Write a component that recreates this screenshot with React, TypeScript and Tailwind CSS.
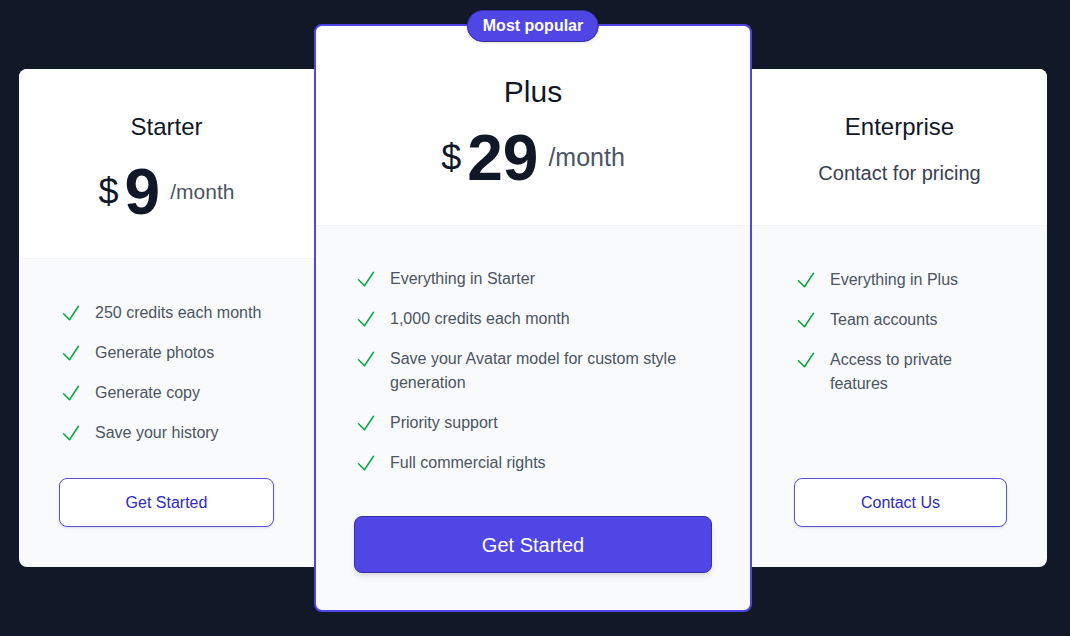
import React from 'react';

const FONT = { fontFamily: '"Liberation Sans", Arial, sans-serif' };

function CheckIcon() {
  return (
    <svg
      viewBox="0 0 24 24"
      fill="none"
      stroke="currentColor"
      strokeWidth={1.5}
      className="h-6 w-6 shrink-0 text-green-600"
    >
      <path strokeLinecap="round" strokeLinejoin="round" d="M4.5 12.75l6 6 9-13.5" />
    </svg>
  );
}

function Features({ items }: { items: string[] }) {
  return (
    <ul className="flex flex-col gap-4">
      {items.map(item => (
        <li key={item} className="flex items-start gap-3 text-base leading-6 text-gray-600">
          <CheckIcon />
          <span>{item}</span>
        </li>
      ))}
    </ul>
  );
}

export default function App() {
  return (
    <div style={FONT} className="flex h-screen w-full items-center bg-[#111827] pl-[19px]">
      {/* Starter */}
      <div className="flex h-[498px] w-[295px] flex-col overflow-hidden rounded-l-lg bg-gray-50">
        <div className="border-b border-gray-100 bg-white px-10 pt-[42px] pb-[34px] text-center">
          <h3 className="text-2xl leading-8 text-gray-900">Starter</h3>
          <div className="mt-[17px] flex items-center justify-center">
            <span className="text-4xl text-gray-900">$</span>
            <span className="ml-1.5 text-[64px] font-bold leading-none text-gray-900">9</span>
            <span className="ml-2.5 text-[21px] text-gray-600">/month</span>
          </div>
        </div>
        <div className="flex flex-1 flex-col px-10 pt-[42px] pb-10">
          <Features items={['250 credits each month', 'Generate photos', 'Generate copy', 'Save your history']} />
          <button className="mt-auto h-[49px] w-full rounded-lg border border-[#5a52d9] bg-white text-base text-[#2e2bc2] shadow-sm">
            Get Started
          </button>
        </div>
      </div>

      {/* Plus */}
      <div className="relative z-10 flex h-[588px] w-[438px] flex-col rounded-lg border-2 border-[#4f46e5] bg-gray-50">
        <span className="absolute left-1/2 top-0 -translate-x-1/2 -translate-y-1/2 rounded-full border border-[#3730a3] bg-[#4f46e5] px-[15px] py-[3px] text-base font-bold leading-6 text-white shadow">
          Most popular
        </span>
        <div className="rounded-t-lg border-b border-gray-100 bg-white px-[38px] pt-[48px] pb-[35px] text-center">
          <h3 className="text-3xl leading-9 text-gray-900">Plus</h3>
          <div className="mt-4 flex items-center justify-center">
            <span className="text-4xl text-gray-900">$</span>
            <span className="ml-1.5 text-[64px] font-bold leading-none text-gray-900">29</span>
            <span className="ml-2.5 text-[25px] text-gray-600">/month</span>
          </div>
        </div>
        <div className="flex flex-1 flex-col rounded-b-lg px-[38px] pt-[41px] pb-[37px]">
          <Features
            items={[
              'Everything in Starter',
              '1,000 credits each month',
              'Save your Avatar model for custom style generation',
              'Priority support',
              'Full commercial rights',
            ]}
          />
          <button className="mt-auto h-[57px] w-full rounded-lg border border-[#3730a3] bg-[#4f46e5] text-xl text-white shadow-md">
            Get Started
          </button>
        </div>
      </div>

      {/* Enterprise */}
      <div className="flex h-[498px] w-[295px] flex-col overflow-hidden rounded-r-lg bg-gray-50">
        <div className="border-b border-gray-100 bg-white px-10 pt-[42px] pb-[38px] text-center">
          <h3 className="text-2xl leading-8 text-gray-900">Enterprise</h3>
          <p className="mt-[16px] text-xl leading-7 text-gray-700">Contact for pricing</p>
        </div>
        <div className="flex flex-1 flex-col pl-[42px] pr-10 pt-[42px] pb-10">
          <Features items={['Everything in Plus', 'Team accounts', 'Access to private features']} />
          <button className="mt-auto h-[49px] w-full rounded-lg border border-[#5a52d9] bg-white text-base text-[#2e2bc2] shadow-sm">
            Contact Us
          </button>
        </div>
      </div>
    </div>
  );
}
